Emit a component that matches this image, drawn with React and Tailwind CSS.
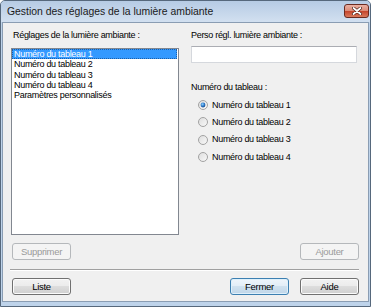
import React from 'react';

const items = ['Numéro du tableau 1', 'Numéro du tableau 2', 'Numéro du tableau 3', 'Numéro du tableau 4', 'Paramètres personnalisés'];
const radios = ['Numéro du tableau 1', 'Numéro du tableau 2', 'Numéro du tableau 3', 'Numéro du tableau 4'];

function Radio({ checked }) {
  return (
    <svg width="10" height="10" viewBox="0 0 10 10" className="shrink-0">
      <defs>
        <linearGradient id="rb" x1="0" y1="0" x2="1" y2="1">
          <stop offset="0" stopColor="#dcdcdc" />
          <stop offset="1" stopColor="#fafafa" />
        </linearGradient>
        <radialGradient id="rd" cx="0.4" cy="0.35" r="0.7">
          <stop offset="0" stopColor="#8ad0ff" />
          <stop offset="0.6" stopColor="#2a74c4" />
          <stop offset="1" stopColor="#133e78" />
        </radialGradient>
      </defs>
      <circle cx="5" cy="5" r="4.5" fill="url(#rb)" stroke="#a2a2a2" strokeWidth="1" />
      {checked && <circle cx="5" cy="5" r="2.4" fill="url(#rd)" />}
    </svg>
  );
}

function Btn({ children, disabled, primary, className = '' }) {
  const look = disabled
    ? 'border-[#b5b8bb] bg-[#f4f4f4] text-[#9a9a9a]'
    : primary
      ? 'border-[#3c7fb1] bg-[linear-gradient(#eef5fb_0%,#e1edf7_50%,#cfe1ef_50%,#c0d6e9_100%)] shadow-[inset_0_0_0_1px_#def0fb] text-black'
      : 'border-[#707070] bg-[linear-gradient(#f2f2f2_0%,#ebebeb_50%,#dddddd_50%,#cfcfcf_100%)] shadow-[inset_0_0_0_1px_#fbfbfb] text-black';
  return (
    <button className={`h-[17px] w-[59px] rounded-[3px] border flex items-center justify-center text-[9.5px] leading-none tracking-[-0.3px] ${look} ${className}`}>
      {children}
    </button>
  );
}

export default function App() {
  return (
    <div className="w-[371px] h-[307px] flex flex-col bg-[#bed3ea] border border-[#56687c] rounded-t-[5px] font-['Liberation_Sans',Arial,sans-serif] text-black">
      {/* title bar */}
      <div className="h-[21px] flex items-start pl-[6px] pr-[1px] bg-[linear-gradient(#b6cbe4,#d2e0f0)] rounded-t-[4px]">
        <span className="mt-[5px] text-[10.4px] leading-[11px] text-[#1a1a1a]">Gestion des réglages de la lumière ambiante</span>
        <div className="ml-auto mt-[3px] w-[25px] h-[14px] rounded-[3px] border border-[#6b2b20] bg-[linear-gradient(#eab0a2_0%,#dc8c78_48%,#c5452c_52%,#d97a5c_100%)] flex items-center justify-center">
          <svg width="10" height="8" viewBox="0 0 10 8">
            <path d="M1.5 1 L8.5 7 M8.5 1 L1.5 7" stroke="#4a1f16" strokeWidth="3.2" strokeLinecap="round" />
            <path d="M1.5 1 L8.5 7 M8.5 1 L1.5 7" stroke="#ffffff" strokeWidth="1.8" strokeLinecap="round" />
          </svg>
        </div>
      </div>

      {/* client area */}
      <div className="flex-1 mx-[1px] mb-[4px] bg-[#f0f0f0] border border-[#8a9db3] flex flex-col px-[8px] text-[9px] tracking-[-0.3px]">
        <div className="flex gap-[12px] pt-[7px]">
          <div className="w-[168px] flex flex-col">
            <div className="leading-[11px] pl-[2px]">Réglages de la lumière ambiante :</div>
            <div className="mt-[7px] h-[187px] border border-[#828790] bg-white">
              {items.map((t, i) => (
                <div
                  key={t}
                  className={`h-[10.25px] leading-[10.25px] pl-[2px] mr-[1px] ${i === 0 ? 'bg-[#3399ff] text-white outline outline-1 outline-dotted outline-[#1c5fa8] -outline-offset-1' : ''}`}
                >
                  {t}
                </div>
              ))}
            </div>
          </div>

          <div className="w-[166px] flex flex-col">
            <div className="leading-[11px]">Perso régl. lumière ambiante :</div>
            <div className="mt-[5px] h-[17px] bg-white border border-[#d5d8dd] border-t-[#abadb3]" />
            <div className="mt-[19px] leading-[11px]">Numéro du tableau :</div>
            <div className="mt-[3.5px] flex flex-col">
              {radios.map((t, i) => (
                <div key={t} className="h-[17.33px] flex items-center pl-[7px] gap-[4px]">
                  <Radio checked={i === 0} />
                  <span className="leading-[11px]">{t}</span>
                </div>
              ))}
            </div>
          </div>
        </div>

        <div className="flex justify-between mt-[8px] px-[1px]">
          <Btn disabled>Supprimer</Btn>
          <Btn disabled>Ajouter</Btn>
        </div>

        <div className="mt-[9px] -ml-[1px] mr-[1px] h-[2px] border-t border-[#a0a0a0] border-b border-b-white" />

        <div className="flex mt-[7px] px-[1px]">
          <Btn>Liste</Btn>
          <Btn primary className="ml-auto">Fermer</Btn>
          <Btn className="ml-[11px]">Aide</Btn>
        </div>
      </div>
    </div>
  );
}
